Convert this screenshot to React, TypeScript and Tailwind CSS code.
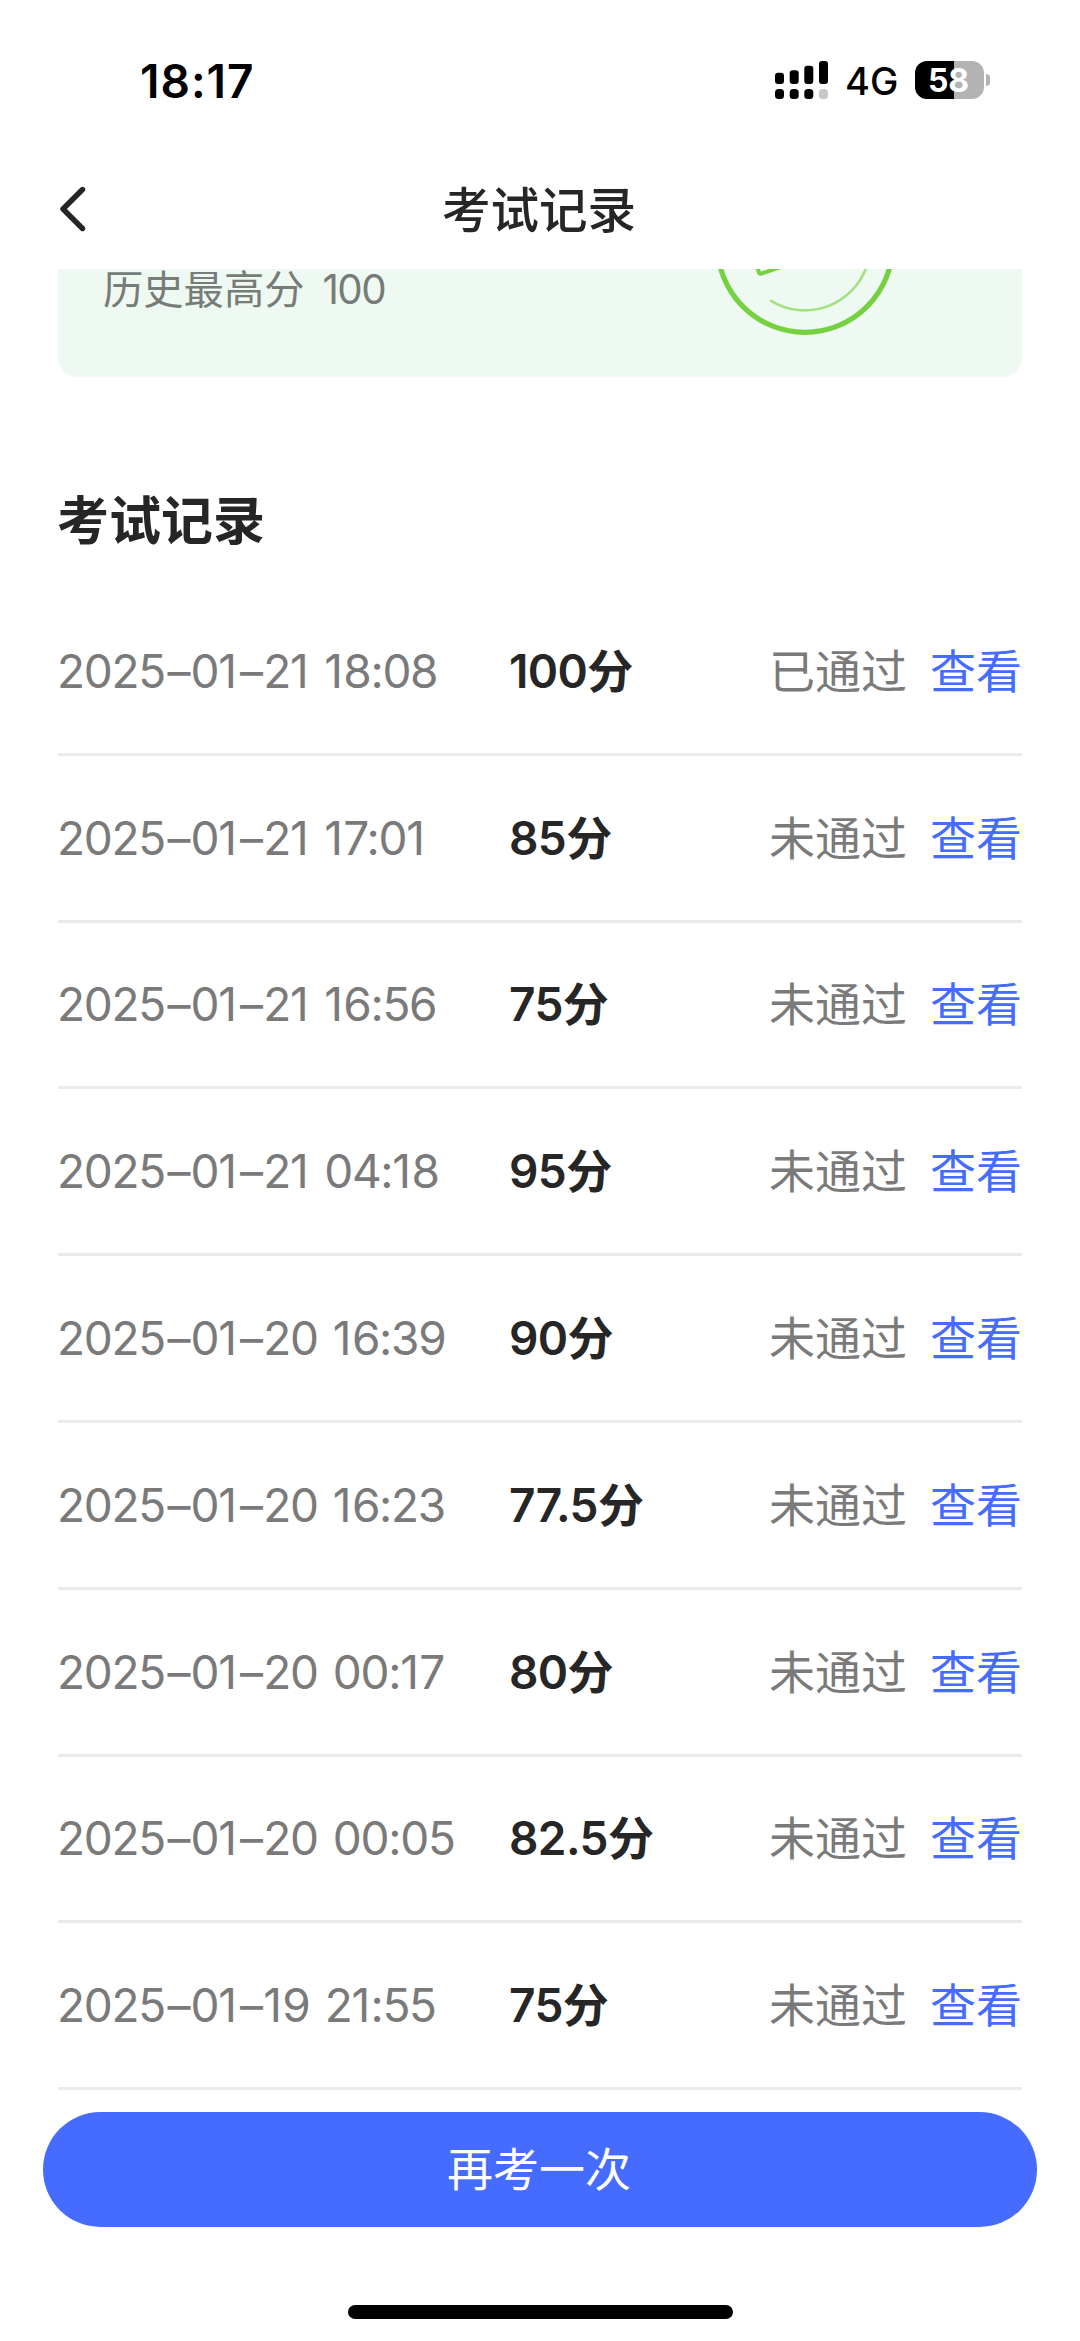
const latin = "font-['Inter','Noto_Sans_CJK_SC',sans-serif]";

type ExamRecord = { time: string; score: string; status: string };

const records: ExamRecord[] = [
  { time: '2025–01–21 18:08', score: '100', status: '已通过' },
  { time: '2025–01–21 17:01', score: '85', status: '未通过' },
  { time: '2025–01–21 16:56', score: '75', status: '未通过' },
  { time: '2025–01–21 04:18', score: '95', status: '未通过' },
  { time: '2025–01–20 16:39', score: '90', status: '未通过' },
  { time: '2025–01–20 16:23', score: '77.5', status: '未通过' },
  { time: '2025–01–20 00:17', score: '80', status: '未通过' },
  { time: '2025–01–20 00:05', score: '82.5', status: '未通过' },
  { time: '2025–01–19 21:55', score: '75', status: '未通过' },
];

function SignalIcon() {
  return (
    <svg width="54" height="38" viewBox="0 0 54 38" className="shrink-0">
      <rect x="0" y="11.7" width="9" height="11.3" rx="3" />
      <rect x="14.7" y="9.3" width="9" height="13.7" rx="3" />
      <rect x="29.3" y="4.7" width="9" height="18.3" rx="3" />
      <rect x="44" y="0" width="9" height="23" rx="3" />
      <rect x="0" y="28" width="9" height="10" rx="3.5" />
      <rect x="14.7" y="28" width="9" height="10" rx="3.5" />
      <rect x="29.3" y="28" width="9" height="10" rx="3.5" />
      <rect x="44" y="28" width="9" height="10" rx="3.5" fill="#c8c8c8" />
    </svg>
  );
}

function Battery() {
  return (
    <div className="flex items-center gap-[2px]">
      <div className="flex h-[38px] w-[69px] items-center justify-center rounded-[12px] bg-[linear-gradient(90deg,#000_39.5px,#b3b3b3_39.5px)] pt-px pr-[2px] text-[32px] leading-none font-bold tracking-[-0.2px] text-white">
        58
      </div>
      <div className="h-3 w-1 rounded-r-full bg-[#b3b3b3]" />
    </div>
  );
}

function StatusBar() {
  return (
    <div className="flex h-[160px] items-center justify-between pr-[90px] pl-[140px] text-black">
      <span className="mt-px text-[46px] leading-none font-semibold tracking-[1px]">18:17</span>
      <div className="flex items-center">
        <SignalIcon />
        <span className="mt-[2px] ml-[16px] w-[70px] text-[38px] leading-none font-medium">4G</span>
        <Battery />
      </div>
    </div>
  );
}

function PassStamp() {
  return (
    <svg width="186" height="66" viewBox="712 269 186 66" fill="none" stroke="#75d142" className="shrink-0">
      <circle cx="805" cy="244.7" r="87.6" strokeWidth="5.2" />
      <path d="M771 300.8A65.3 65.3 0 0 0 866.5 267" stroke="#a3e083" strokeWidth="2.6" strokeLinecap="round" />
      <path d="M757 266l1.8 6q.8 2.4 3.2 1.4L784 266" strokeWidth="4" />
    </svg>
  );
}

// Dashes and the narrow digit 1 get extra side room so the columns read evenly.
function Timestamp({ value }: { value: string }) {
  return (
    <span className="-ml-px w-[452px] tracking-[-1.3px] [word-spacing:3.5px] whitespace-nowrap text-[#7a7a7a]">
      {value.split(/([–1])/).map((part, i) => {
        if (part === '–') return <span key={i} className="mr-[1.5px] ml-[2.5px]">–</span>;
        if (part === '1') return <span key={i} className="mr-[1.7px]">1</span>;
        return part;
      })}
    </span>
  );
}

export default function App() {
  return (
    <div className={`flex h-[2341px] w-[1080px] flex-col overflow-hidden bg-white text-[#262626] ${latin}`}>
      <StatusBar />
      <header className="grid h-[109px] grid-cols-[1fr_auto_1fr] items-start px-[58px]">
        <svg width="28" height="48" viewBox="0 0 28 48" fill="none" stroke="#262626" strokeWidth="5.4" strokeLinecap="round" strokeLinejoin="round" className="mt-[25px]">
          <path d="M24.5 4.5L5 24L24.5 43.5" />
        </svg>
        <h1 className="mt-[17px] mr-[2px] text-[48.5px] leading-[68px] font-medium">考试记录</h1>
      </header>

      <main className="flex flex-1 flex-col px-[58px]">
        <section className="flex h-[108px] items-start justify-between rounded-b-[20px] bg-[#eef9f1] pr-[124px] pl-[45px]">
          <p className="flex gap-[18px] pt-px text-[40.3px] leading-[40px] text-[#777c78]">
            <span>历史最高分</span>
            <span className="tracking-[-1.5px]">100</span>
          </p>
          <PassStamp />
        </section>

        <h2 className="mt-[109px] -ml-[1px] text-[52px] leading-[72px] font-bold">考试记录</h2>

        <ul className="mt-[31px]">
          {records.map((r) => (
            <li key={r.time} className="flex h-[166.8px] items-center border-b-3 border-[#ebebeb] text-[46px] leading-[64px]">
              <Timestamp value={r.time} />
              <span className="flex-1 font-semibold tracking-[-0.6px]">{r.score}分</span>
              <span className="text-[#7a7a7a]">{r.status}</span>
              <a className="ml-[23px] text-[#456bff]">查看</a>
            </li>
          ))}
        </ul>
      </main>

      <footer className="flex h-[229px] flex-col items-center">
        <button className="h-[115px] w-[994px] rounded-full bg-[#456bff] pr-[2px] pb-[2px] text-[46px] leading-[64px] text-white">再考一次</button>
        <div className="mt-[78px] h-[14px] w-[385px] rounded-full bg-black" />
      </footer>
    </div>
  );
}
